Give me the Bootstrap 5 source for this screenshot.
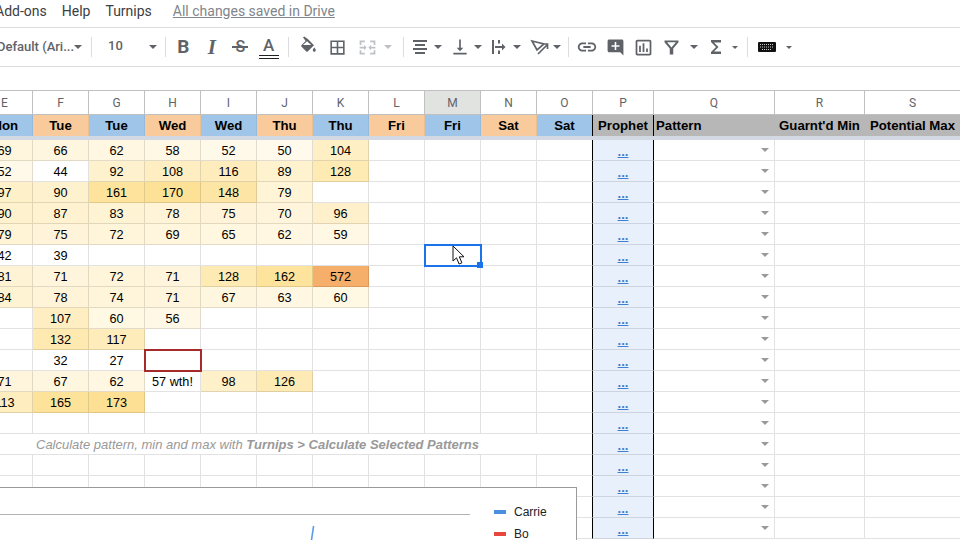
<!DOCTYPE html>
<html lang="en">

<head>
    <meta charset="utf-8">
    <meta name="viewport" content="width=device-width, initial-scale=1">
    <title>Turnips - Google Sheets</title>

    <!-- Bootstrap CSS -->
    <link href="https://cdn.jsdelivr.net/npm/bootstrap@5.3.3/dist/css/bootstrap.min.css" rel="stylesheet">
    <style>
        html, body { height: 540px; overflow: hidden; background: #fff; }
        body { font-family: Roboto, "Liberation Sans", sans-serif; }

        /* menu bar */
        .menu-row { height: 28px; padding: 0 0 4px 0; margin-left: -5px; border-bottom: 1px solid #dadce0; font-size: 14px; color: #3c4043; gap: 15px; }
        .saved-link { margin-left: 6px; color: #80868b; text-decoration: underline; }

        /* toolbar */
        .tool-row { height: 39px; margin-left: -8px; border-bottom: 1px solid #dadce0; color: #5f6368; }
        .tool-sep { width: 1px; height: 20px; background: #dadce0; flex: none; }
        .tool-group { flex: none; height: 38px; }
        .tool-btn { flex: none; height: 24px; width: 24px; color: #5f6368; display: flex; align-items: center; justify-content: center; }
        .tool-btn svg { display: block; flex: none; }
        .tool-caret { flex: none; width: 0; height: 0; border-left: 4px solid transparent; border-right: 4px solid transparent; border-top: 4px solid #5f6368; }
        .tool-caret.small-caret { border-left-width: 3px; border-right-width: 3px; border-top-width: 3px; }
        .tool-caret.off { border-top-color: #bdc1c6; }
        .caret-slot { flex: none; width: 12px; }
        .g-font { width: 99px; font-size: 13px; font-weight: 500; padding-right: 9px; white-space: nowrap; }
        .g-font span { margin-left: 5px; }
        .g-size { width: 73px; font-size: 13px; font-weight: 500; padding: 0 8px 0 16px; }
        .g-size span { margin-top: -2px; }
        .g-text { width: 122px; padding-left: 3px; }
        .g-text .tool-btn { width: 28.5px; text-align: center; font-size: 19px; line-height: 24px; font-weight: 700; }
        .g-text .letter-i { font-family: "Liberation Serif", serif; font-style: italic; font-size: 21px; }
        .g-text .letter-s { position: relative; font-size: 16px; font-weight: 500; }
        .letter-s::after { content: ""; position: absolute; left: 6px; right: 7px; top: 11px; height: 2px; background: #5f6368; }
        .g-text .letter-a { position: relative; align-items: flex-start; font-size: 17px; font-weight: 500; line-height: 20px; }
        .letter-a::after { content: ""; position: absolute; left: 4px; right: 4px; top: 20px; height: 4px; border-top: 1px solid #202124; border-bottom: 1px solid #202124; }
        .g-fill { width: 114px; padding-left: 3px; }
        .g-fill .tool-btn { width: 30px; }
        .g-align { width: 164px; padding-left: 4px; }
        .g-align .caret-slot { margin-right: 3.5px; }
        .g-insert { width: 178px; padding-left: 4px; }
        .g-insert .tool-btn { width: 28px; }
        .g-insert .funnel-btn { width: 29px; }
        .g-insert .sum-btn { width: 26px; margin-left: 1px; }
        .g-insert .funnel-caret { width: 16px; }
        .g-insert .sum-caret { width: 11px; }
        .g-keys { padding-left: 10px; }
        .g-keys .tool-btn { width: 18px; }
        .g-keys .caret-slot { width: 18px; margin-left: 4px; }

        .formula-gap { height: 23px; }

        /* sheet */
        .sheet-wrap { margin-left: -23px; }
        .sheet-grid { table-layout: fixed; width: 984px; border-collapse: separate; border-spacing: 0; font-family: "Liberation Sans", Arial, sans-serif; font-size: 12.7px; line-height: 18px; color: #000; }
        .sheet-grid td, .sheet-grid th { padding: 1px 0 0 0; height: 21px; text-align: center; vertical-align: middle; border-right: 1px solid rgba(0, 0, 0, .115); border-bottom: 1px solid rgba(0, 0, 0, .115); white-space: nowrap; overflow: hidden; font-weight: 400; }
        .c-base { width: 56px; }
        .c-p { width: 61px; }
        .c-q { width: 121px; }
        .c-r { width: 90px; }
        .c-s { width: 96px; }
        .sheet-grid .label-row th { height: 25px; padding: 0; border-top: 1px solid #c0c0c0; border-right-color: #c0c0c0; border-bottom-color: #c0c0c0; font-family: Roboto, "Liberation Sans", sans-serif; font-size: 12px; color: #5f6368; font-weight: 400; }
        .sheet-grid .label-row th.col-on { background: #e1e3e1; }
        .sheet-grid .day-row td { padding-top: 0; font-size: 13.2px; font-weight: 700; border-bottom: 0; border-right-color: rgba(0, 0, 0, .06); }
        .day-orange { background: #f9cb9c; }
        .day-blue { background: #9fc5e8; }
        .day-gray { background: #b7b7b7; }
        .sheet-grid .day-row td.day-gray { border-right-color: #b7b7b7; }
        .sheet-grid .day-row td.text-start { padding-left: 2px; }
        .sheet-grid .freeze-row td { height: 4px; padding: 0; font-size: 0; line-height: 0; background: #d3d9e3; border: 0; }
        .sheet-grid td.line-black, .sheet-grid .day-row td.line-black { border-right: 1px solid #000; }
        .prophet-cell { background: #e8f0fb; line-height: 1; }
        .sheet-grid td.prophet-cell { vertical-align: bottom; }
        .prophet-cell a { color: #3d7fd0; font-weight: 700; font-size: 13px; line-height: 16px; display: inline-block; }
        .pick-cell { position: relative; }
        .pick-arrow { position: absolute; right: 5px; top: 8px; width: 0; height: 0; border-left: 4.5px solid transparent; border-right: 4.5px solid transparent; border-top: 4.5px solid #999; }
        .sheet-grid td.note-cell { text-align: left; padding-left: 59px; font-style: italic; color: #999; font-size: 13px; }
        .note-cell b { font-weight: 700; }
        .sheet-grid td.bad-cell { position: relative; border-color: #a52a2a; box-shadow: 0 0 0 1px #a52a2a, inset 1px 1px 0 0 #a52a2a; }
        .sheet-grid td.sel-cell { position: relative; overflow: visible; border-color: #1a73e8; box-shadow: 0 0 0 1px #1a73e8, inset 1px 1px 0 0 #1a73e8; }
        .sel-cell::after { content: ""; position: absolute; right: -3px; bottom: -3px; width: 6px; height: 6px; background: #1a73e8; }

        /* things lying over the grid */
        .sheet-chart { position: absolute; left: -40px; top: 487px; width: 617px; height: 80px; background: #fff; border: 1px solid #9a9a9a; font-family: "Liberation Sans", Arial, sans-serif; font-size: 12px; color: #222; }
        .chart-rule { position: absolute; left: 0; top: 26px; width: 509px; height: 1px; background: #b3b3b3; }
        .chart-tick { position: absolute; left: 349px; top: 38px; }
        .chart-legend { position: absolute; left: 533px; top: 15px; gap: 4px; }
        .legend-mark { width: 12px; height: 4px; margin-right: 8px; }
        .mark-blue { background: #4a90e2; }
        .mark-red { background: #e8453c; }
        .mouse-arrow { position: absolute; left: 452px; top: 245px; }
    </style>
</head>

<body class="position-relative">
    <!-- Menu -->
    <div class="menu-row d-flex align-items-center">
        <span>Add-ons</span>
        <span>Help</span>
        <span>Turnips</span>
        <span class="saved-link">All changes saved in Drive</span>
    </div>

    <!-- Toolbar -->
    <div class="tool-row d-flex align-items-center">
        <div class="tool-group g-font d-flex align-items-center justify-content-between"><span>Default (Ari...</span><i class="tool-caret"></i></div>
        <i class="tool-sep"></i>
        <div class="tool-group g-size d-flex align-items-center justify-content-between"><span>10</span><i class="tool-caret"></i></div>
        <i class="tool-sep"></i>
        <div class="tool-group g-text d-flex align-items-center">
            <div class="tool-btn">B</div>
            <div class="tool-btn letter-i">I</div>
            <div class="tool-btn letter-s">S</div>
            <div class="tool-btn letter-a">A</div>
        </div>
        <i class="tool-sep"></i>
        <div class="tool-group g-fill d-flex align-items-center">
            <div class="tool-btn"><svg width="24" height="24" viewBox="0 0 24 24" fill="#5f6368"><path d="M8 2.2 9.2 1.5l3.6 2.6 6.2 6.1-6.3 6.3a1 1 0 0 1-1.4 0l-4.9-4.9a1 1 0 0 1 0-1.4l4.2-4.3L8 2.2zM12 6.2 8 10h8.2L12 6.2z"/><path d="M19.3 12.5s-1.5 1.6-1.5 2.7c0 .8.7 1.5 1.5 1.5s1.5-.7 1.5-1.5c0-1.1-1.5-2.7-1.5-2.7z"/></svg></div>
            <div class="tool-btn"><svg width="19" height="19" viewBox="0 0 24 24" fill="#5f6368"><path d="M3 3v18h18V3H3zm8 16H5v-6h6v6zm0-8H5V5h6v6zm8 8h-6v-6h6v6zm0-8h-6V5h6v6z"/></svg></div>
            <div class="tool-btn"><svg width="21" height="21" viewBox="0 0 24 24" fill="#bdc1c6"><path d="M3 4h6v2H5v3H3V4zm12 0h6v5h-2V6h-4V4zM3 15h2v3h4v2H3v-5zm16 0h2v5h-6v-2h4v-3zM3 11h5V9l3 3-3 3v-2H3v-2zm18 0v2h-5v2l-3-3 3-3v2h5z"/></svg></div>
            <div class="caret-slot d-flex justify-content-center"><i class="tool-caret off"></i></div>
        </div>
        <i class="tool-sep"></i>
        <div class="tool-group g-align d-flex align-items-center">
            <div class="tool-btn"><svg width="24" height="24" viewBox="0 0 24 24" fill="#5f6368"><path d="M5 5h14v2H5zM7 9h10v2H7zM5 13h14v2H5zM7 17h10v2H7z"/></svg></div>
            <div class="caret-slot d-flex justify-content-center"><i class="tool-caret"></i></div>
            <div class="tool-btn"><svg width="20" height="20" viewBox="0 0 24 24" fill="#5f6368"><path d="M16 13h-3V3h-2v10H8l4 4 4-4zM4 19v2h16v-2H4z"/></svg></div>
            <div class="caret-slot d-flex justify-content-center"><i class="tool-caret"></i></div>
            <div class="tool-btn"><svg width="24" height="24" viewBox="0 0 24 24" fill="#5f6368"><path d="M5 5h2v14H5zM11 5h2v3.5h-2zM11 15.5h2V19h-2zM8 11h7V8.5l3.5 3.5-3.5 3.5V13H8z"/></svg></div>
            <div class="caret-slot d-flex justify-content-center"><i class="tool-caret"></i></div>
            <div class="tool-btn"><svg width="24" height="24" viewBox="0 0 24 24" fill="none" stroke="#5f6368" stroke-width="1.7"><path d="M5 6l12 3-7 6L5 6zM11 19l9-9M15 9h5.5v5"/></svg></div>
            <div class="caret-slot d-flex justify-content-center"><i class="tool-caret"></i></div>
        </div>
        <i class="tool-sep"></i>
        <div class="tool-group g-insert d-flex align-items-center">
            <div class="tool-btn"><svg width="22" height="22" viewBox="0 0 24 24" fill="#5f6368"><path d="M3.9 12c0-1.71 1.39-3.1 3.1-3.1h4V7H7c-2.76 0-5 2.24-5 5s2.24 5 5 5h4v-1.9H7c-1.71 0-3.1-1.39-3.1-3.1zM8 13h8v-2H8v2zm9-6h-4v1.9h4c1.71 0 3.1 1.39 3.1 3.1s-1.39 3.1-3.1 3.1h-4V17h4c2.76 0 5-2.24 5-5s-2.24-5-5-5z"/></svg></div>
            <div class="tool-btn"><svg width="19" height="19" viewBox="0 0 24 24" fill="#5f6368"><path d="M22 4c0-1.1-.9-2-2-2H4c-1.1 0-2 .9-2 2v12c0 1.1.9 2 2 2h14l4 4V4zm-5 7h-4v4h-2v-4H7V9h4V5h2v4h4v2z"/></svg></div>
            <div class="tool-btn"><svg width="21" height="21" viewBox="0 0 24 24" fill="#5f6368"><path d="M9 17H7v-7h2v7zm4 0h-2V7h2v10zm4 0h-2v-4h2v4zm2 2H5V5h14v14zm0-16H5c-1.1 0-2 .9-2 2v14c0 1.1.9 2 2 2h14c1.1 0 2-.9 2-2V5c0-1.1-.9-2-2-2z"/></svg></div>
            <div class="tool-btn funnel-btn"><svg width="21" height="21" viewBox="0 0 24 24" fill="#5f6368"><path d="M4 4h16v2l-6 7v7h-4v-7L4 6V4zm3 2 5 6 5-6H7z"/></svg></div>
            <div class="caret-slot funnel-caret d-flex justify-content-center"><i class="tool-caret"></i></div>
            <div class="tool-btn sum-btn"><svg width="24" height="24" viewBox="0 0 24 24" fill="#5f6368"><path d="M7 5h10v2.4h-7l4.5 4.6L10 16.6h7V19H7v-2l5-5-5-5z"/></svg></div>
            <div class="caret-slot sum-caret d-flex justify-content-center"><i class="tool-caret small-caret"></i></div>
        </div>
        <i class="tool-sep"></i>
        <div class="tool-group g-keys d-flex align-items-center">
            <div class="tool-btn"><svg width="18" height="10" viewBox="0 0 18 10"><rect width="18" height="10" rx="1" fill="#111"/><path d="M2 2.5h14M2 5h14M4 7.5h10" stroke="#ccc" stroke-width="1" stroke-dasharray="1 1"/></svg></div>
            <div class="caret-slot d-flex justify-content-center"><i class="tool-caret small-caret"></i></div>
        </div>
    </div>

    <div class="formula-gap"></div>

    <!-- Hoja -->
    <div class="sheet-wrap">
        <table class="sheet-grid">
            <colgroup>
                <col class="c-base"><col class="c-base"><col class="c-base"><col class="c-base"><col class="c-base"><col class="c-base">
                <col class="c-base"><col class="c-base"><col class="c-base"><col class="c-base"><col class="c-base">
                <col class="c-p"><col class="c-q"><col class="c-r"><col class="c-s">
            </colgroup>
            <thead>
                <tr class="label-row">
                    <th>E</th><th>F</th><th>G</th><th>H</th><th>I</th><th>J</th><th>K</th><th>L</th>
                    <th class="col-on">M</th><th>N</th><th>O</th><th>P</th><th>Q</th><th>R</th><th>S</th>
                </tr>
            </thead>
            <tbody id="sheetBody">
                <tr class="day-row">
                    <td class="day-blue">Mon</td><td class="day-orange">Tue</td><td class="day-blue">Tue</td>
                    <td class="day-orange">Wed</td><td class="day-blue">Wed</td><td class="day-orange">Thu</td>
                    <td class="day-blue">Thu</td><td class="day-orange">Fri</td><td class="day-blue">Fri</td>
                    <td class="day-orange">Sat</td><td class="day-blue line-black">Sat</td>
                    <td class="day-gray line-black">Prophet</td><td class="day-gray text-start">Pattern</td>
                    <td class="day-gray">Guarnt'd Min</td><td class="day-gray">Potential Max</td>
                </tr>
                <tr class="freeze-row"><td colspan="15"></td></tr>
            </tbody>
        </table>
    </div>

    <!-- Grafico -->
    <div class="sheet-chart">
        <div class="chart-rule"></div>
        <svg class="chart-tick" width="6" height="14" viewBox="0 0 6 14"><path d="M3.6 0 1.5 14" stroke="#5b9be6" stroke-width="1.6" fill="none"/></svg>
        <div class="chart-legend d-flex flex-column">
            <div class="d-flex align-items-center"><i class="legend-mark mark-blue"></i>Carrie</div>
            <div class="d-flex align-items-center"><i class="legend-mark mark-red"></i>Bo</div>
        </div>
    </div>

    <svg class="mouse-arrow" width="14" height="21" viewBox="0 0 14 21"><path d="M1 1v15l3.5-3.2 2.6 6.2 2.8-1.2-2.6-6h4.7L1 1z" fill="#fff" stroke="#111" stroke-width="1"/></svg>

    <script>
        // precios de cada fila, columnas E a K
        const rows = [
            [69, 66, 62, 58, 52, 50, 104],
            [52, 44, 92, 108, 116, 89, 128],
            [97, 90, 161, 170, 148, 79, null],
            [90, 87, 83, 78, 75, 70, 96],
            [79, 75, 72, 69, 65, 62, 59],
            [42, 39, null, null, null, null, null],
            [81, 71, 72, 71, 128, 162, 572],
            [84, 78, 74, 71, 67, 63, 60],
            [null, 107, 60, 56, null, null, null],
            [null, 132, 117, null, null, null, null],
            [null, 32, 27, "bad", null, null, null],
            [71, 67, 62, "57 wth!", 98, 126, null],
            [113, 165, 173, null, null, null, null]
        ];

        const mix = function (a, b, t) {
            return a.map((v, i) => Math.round(v + (b[i] - v) * t)).join(",");
        };

        const heat = function (n) {
            if (n < 48) return "";
            if (n <= 175) return "rgb(" + mix([255, 250, 236], [253, 224, 146], (n - 48) / 127) + ")";
            return "rgb(" + mix([253, 224, 146], [246, 174, 107], (n - 175) / 397) + ")";
        };

        const body = document.getElementById("sheetBody");
        for (let r = 0; r < 19; r++) {
            const tr = document.createElement("tr");
            let html = "";
            if (r === 14) {
                html += "<td class='note-cell line-black' colspan='11'>Calculate pattern, min and max with <b>Turnips &gt; Calculate Selected Patterns</b></td>";
            } else {
                for (let c = 0; c < 11; c++) {
                    const val = rows[r] ? rows[r][c] : null;
                    let cls = c === 10 ? "line-black" : "";
                    if (val === "bad") {
                        html += "<td class='bad-cell'></td>";
                    } else if (typeof val === "number") {
                        html += "<td style='background:" + heat(val) + "'>" + val + "</td>";
                    } else if (val) {
                        html += "<td>" + val + "</td>";
                    } else {
                        if (r === 5 && c === 8) cls += " sel-cell";
                        html += "<td class='" + cls + "'></td>";
                    }
                }
            }
            html += "<td class='prophet-cell line-black'><a href='#'>...</a></td>";
            html += "<td class='pick-cell'><i class='pick-arrow'></i></td><td></td><td></td>";
            tr.innerHTML = html;
            body.appendChild(tr);
        }
    </script>
    <!-- Bootstrap JS -->
    <script src="https://cdn.jsdelivr.net/npm/bootstrap@5.3.3/dist/js/bootstrap.bundle.min.js"></script>
</body>

</html>
